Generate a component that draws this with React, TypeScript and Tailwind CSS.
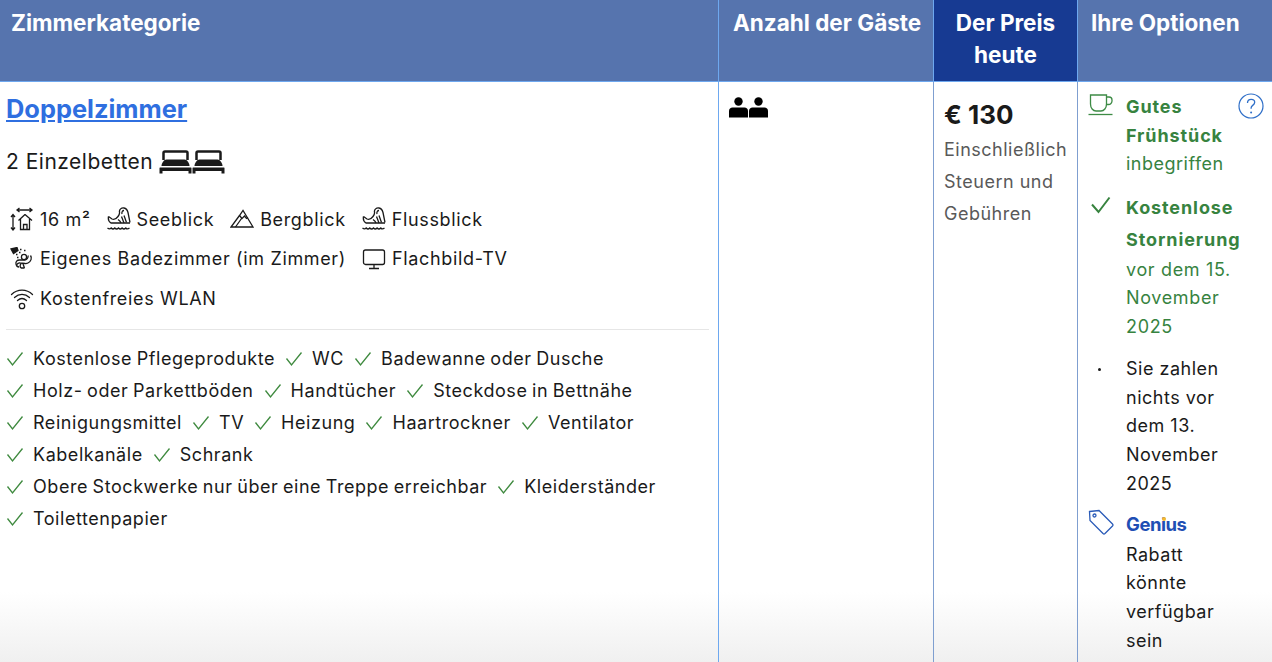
import React from "react";

const SizeIcon = () => (
  <svg width="24" height="24" viewBox="0 0 24 24" fill="none" stroke="#1a1a1a" strokeWidth="1.300" className="shrink-0">
    <path d="M7 3h15M9.500 1l-2.500 2 2.500 2M19.500 1l2.500 2-2.500 2" />
    <path d="M3 8v15M1 10l2-2.500L5 10M1 20.500l2 2.500 2-2.500" />
    <path d="M15 7.500L8.500 13.500M15 7.500l7 6M10.500 12v10.500h9V12M13.500 22.500v-5h3.500v5" />
  </svg>
);

const WaterViewIcon = () => (
  <svg width="24" height="24" viewBox="0 0 24 24" fill="none" stroke="#1a1a1a" strokeWidth="1.300" className="shrink-0">
    <path d="M1.500 9.500l3.500 2.500c2.500 1 4.500-.5 6-2.500 1.200-1.600 1.800-3 1.500-4.500C12 2.500 14.500.5 17 1c2.500.5 3.500 2.500 4 4.500l2 10" />
    <path d="M15 7c-.5-2 .5-3.500 2-3.500M17 8.500l2.500 7M14.500 9.500l2.500 6.500M11 12.500c1.500 1 2.500 2 3 3.500" />
    <path d="M1.500 9.500c-.5 2.500 0 5 2.500 6.500h19" />
    <path d="M.5 21c1.500 1.300 2.500 1.300 3.700 0 1.200 1.300 2.400 1.300 3.600 0 1.200 1.300 2.400 1.300 3.700 0 1.200 1.300 2.400 1.300 3.600 0 1.200 1.300 2.400 1.300 3.700 0 1 1.300 2 1.300 3.700 0" />
  </svg>
);

const MountainIcon = () => (
  <svg width="24" height="24" viewBox="0 0 24 24" fill="none" stroke="#1a1a1a" strokeWidth="1.300" className="shrink-0">
    <path d="M1 20h22L13 3.500 9.500 8.500 1 20z" />
    <path d="M5.500 20l6-8.500M9.500 8.500l2.500 3 2.500-2.500 2 2.500 1.500-1" />
  </svg>
);

const ShowerIcon = () => (
  <svg width="24" height="24" viewBox="0 0 24 24" fill="none" stroke="#1a1a1a" strokeWidth="1.300" className="shrink-0">
    <path d="M1 2l6-1.500 1 3-4.500 3z" fill="#1a1a1a" />
    <path d="M10 2.500h1.500M14 3.500h1.500M9 5.500h1.500M6 7.500h1.500M7 10.500h1.500" strokeWidth="1.500" />
    <circle cx="14" cy="10" r="2.600" />
    <path d="M20.500 8.500c1.800 2.500.5 6-2.500 7.500-1 .5-2.200.6-3 .5l-5-.5c-1.500-.2-2.700.5-2.800 1.700" />
    <path d="M18 8.500c.5 2-1 4.500-3 4.500H9.500c-2.500 0-4 1.800-3.500 4 .4 1.800 1.500 3 3 3" />
    <path d="M11 16.500c-1 1.500-1 3.500 0 4.500M11 21h3.500M13 17l1.500 4" />
  </svg>
);

const WifiIcon = () => (
  <svg width="24" height="24" viewBox="0 0 24 24" fill="none" stroke="#1a1a1a" strokeWidth="1.300" strokeLinecap="round" className="shrink-0">
    <path d="M1.500 7.500C7.500 1.700 16.500 1.700 22.500 7.500" />
    <path d="M4.500 10.500C9 6.300 15 6.300 19.500 10.500" />
    <path d="M7.500 13.500c2.700-2.400 6.300-2.400 9 0" />
    <circle cx="12" cy="19" r="2.700" />
  </svg>
);

const TvIcon = () => (
  <svg width="24" height="24" viewBox="0 0 24 24" fill="none" stroke="#1a1a1a" strokeWidth="1.300" className="shrink-0">
    <rect x="1.500" y="3" width="21" height="14.500" rx="2" />
    <path d="M12 17.500v4M7 21.500h10" />
  </svg>
);

const BedIcon = () => (
  <svg width="33" height="24" viewBox="0 0 33 24" fill="#1a1a1a" className="shrink-0">
    <path d="M4.500 10V3a1.500 1.500 0 0 1 1.500-1.500h21A1.500 1.500 0 0 1 28.500 3v7" fill="none" stroke="#1a1a1a" strokeWidth="2.500" />
    <path d="M2.500 16c0-3 2.500-6.500 5-6.500h18c2.500 0 5 3.500 5 6.500z" />
    <path d="M1 17.500h31a.5.5 0 0 1 .5.5v5.500h-3V21h-26v2.500h-3V18a.5.5 0 0 1 .5-.5z" />
  </svg>
);

const GuestIcon = () => (
  <svg width="19" height="21" viewBox="0 0 19 21" fill="#000" className="shrink-0">
    <circle cx="9.500" cy="4.500" r="4.200" />
    <path d="M0 20.500V14c0-2 1.500-3.500 3.500-3.500h12c2 0 3.500 1.500 3.500 3.500v6.500z" />
  </svg>
);

const CheckSmall = () => (
  <svg width="18" height="18" viewBox="0 0 18 18" fill="none" stroke="#3f8a3f" strokeWidth="1.300" className="shrink-0">
    <path d="M1.500 8.500l5 6.500L16.500 2.500" />
  </svg>
);

const Amenity = ({ label }: { label: string }) => (
  <span className="flex items-center gap-[9px] text-[18px] leading-[32px] tracking-[0.55px] text-[#1a1a1a] [word-spacing:-1px]">
    <CheckSmall />
    {label}
  </span>
);

const Facility = ({ icon, label }: { icon: React.ReactNode; label: string }) => (
  <span className="flex items-center gap-[6px] text-[18px] tracking-[0.65px] text-[#1a1a1a]">
    {icon}
    {label}
  </span>
);

const amenityRows = [
  ["Kostenlose Pflegeprodukte", "WC", "Badewanne oder Dusche"],
  ["Holz- oder Parkettböden", "Handtücher", "Steckdose in Bettnähe"],
  ["Reinigungsmittel", "TV", "Heizung", "Haartrockner", "Ventilator"],
  ["Kabelkanäle", "Schrank"],
  ["Obere Stockwerke nur über eine Treppe erreichbar", "Kleiderständer"],
  ["Toilettenpapier"],
];

export default function App() {
  return (
    <div className="relative h-[662px] w-[1272px] overflow-hidden bg-white font-['Inter',sans-serif]">
      {/* fade at the bottom edge, sits behind the table */}
      <div className="absolute bottom-0 left-0 h-[70px] w-full bg-gradient-to-b from-transparent to-[#f0f0f0]" />

      {/* header row */}
      <div className="relative flex h-[82px] border-b border-[#6ea8ef] text-[22.500px] font-bold leading-[32px] text-white">
        <div className="w-[719px] shrink-0 border-r border-[#6ea8ef] bg-[#5674ae] pl-[11px] pt-[7px]">Zimmerkategorie</div>
        <div className="w-[215px] shrink-0 border-r border-[#6ea8ef] bg-[#5674ae] pl-[14px] pt-[7px]">Anzahl der Gäste</div>
        <div className="w-[144px] shrink-0 border-r border-[#6ea8ef] bg-[#173a92] pt-[7px] text-center">Der Preis heute</div>
        <div className="flex-1 bg-[#5674ae] pl-[13px] pt-[7px]">Ihre Optionen</div>
      </div>

      {/* body row */}
      <div className="relative flex h-[580px]">
        <div className="w-[719px] shrink-0 border-r border-[#6ea8ef] pl-[6px] pr-[9px]">
          <a className="mt-[11px] block text-[25.400px] font-bold leading-[32px] text-[#2f6fe0] underline">Doppelzimmer</a>
          <div className="mt-[25px] flex h-[24px] items-center text-[21px] tracking-[0.5px] text-[#1a1a1a]">
            <span className="mr-[6px]">2 Einzelbetten</span>
            <BedIcon />
            <BedIcon />
          </div>
          <div className="mt-[33px] flex flex-col gap-[15.750px] border-b border-[#e6e6e6] pb-[18.500px] pl-[4px]">
            <div className="flex h-[24px] items-center gap-[16px]">
              <Facility icon={<SizeIcon />} label="16 m²" />
              <Facility icon={<WaterViewIcon />} label="Seeblick" />
              <Facility icon={<MountainIcon />} label="Bergblick" />
              <Facility icon={<WaterViewIcon />} label="Flussblick" />
            </div>
            <div className="flex h-[24px] items-center gap-[16px]">
              <Facility icon={<ShowerIcon />} label="Eigenes Badezimmer (im Zimmer)" />
              <Facility icon={<TvIcon />} label="Flachbild-TV" />
            </div>
            <div className="flex h-[24px] items-center gap-[16px]">
              <Facility icon={<WifiIcon />} label="Kostenfreies WLAN" />
            </div>
          </div>
          <div className="mt-[13px]">
            {amenityRows.map((row) => (
              <div key={row[0]} className="flex gap-[10px]">
                {row.map((label) => (
                  <Amenity key={label} label={label} />
                ))}
              </div>
            ))}
          </div>
        </div>

        <div className="flex w-[215px] shrink-0 gap-[1px] border-r border-[#7f9fd0] pl-[10px] pt-[15px]">
          <GuestIcon />
          <GuestIcon />
        </div>

        <div className="w-[144px] shrink-0 border-r border-[#7f9fd0] pl-[10px] pt-[16px]">
          <div className="text-[26px] font-bold leading-[34px] text-[#1a1a1a]">€ 130</div>
          <div className="mt-[2px] text-[18px] leading-[32px] tracking-[0.5px] text-[#595959]">
            Einschließlich
            <br />
            Steuern und
            <br />
            Gebühren
          </div>
        </div>

        <div className="flex-1 pl-[10px] pt-[11px] text-[18px] tracking-[0.5px]">
          <div className="relative flex">
            <svg width="26" height="24" viewBox="0 0 26 24" fill="none" stroke="#3d8b45" strokeWidth="1.300" className="shrink-0">
              <path d="M2.500 2h16v9c0 4-2.500 7-5.500 7H8c-3 0-5.500-3-5.500-7z" />
              <path d="M18.500 4h2.500a3 3 0 0 1 3 3v1a3.500 3.500 0 0 1-3.500 3.500h-2.500" />
              <path d="M.5 21.500h24" />
            </svg>
            <div className="ml-[12px] leading-[28.500px] text-[#37833f]">
              <div className="font-bold tracking-[0.9px]">
                Gutes
                <br />
                Frühstück
              </div>
              <div>inbegriffen</div>
            </div>
            <svg width="26" height="26" viewBox="0 0 26 26" fill="none" className="absolute right-[8px] top-[0px]">
              <circle cx="13" cy="13" r="12" stroke="#2f6fc8" strokeWidth="1.200" />
              <path d="M9.500 10c0-2.300 1.600-3.700 3.700-3.700 2 0 3.500 1.300 3.500 3 0 1.500-.9 2.300-2 3.100-1 .7-1.600 1.300-1.600 2.600v.8" stroke="#2f6fc8" strokeWidth="1.300" />
              <circle cx="13.100" cy="19.500" r="1" fill="#2f6fc8" />
            </svg>
          </div>

          <div className="mt-[13px] flex">
            <svg width="26" height="24" viewBox="0 0 26 24" fill="none" stroke="#37833f" strokeWidth="2" className="mt-[2px] shrink-0">
              <path d="M4 10.500l6.500 7.500L21.500 3.500" />
            </svg>
            <div className="ml-[12px] text-[#37833f]">
              <div className="font-bold leading-[32px] tracking-[0.9px]">
                Kostenlose
                <br />
                Stornierung
              </div>
              <div className="leading-[28.500px] tracking-[0.65px]">
                vor dem 15.
                <br />
                November
                <br />
                2025
              </div>
            </div>
          </div>

          <div className="mt-[14px] flex leading-[28.700px] text-[#1a1a1a]">
            <span className="ml-[10px] mt-[13px] h-[3px] w-[3px] shrink-0 rounded-full bg-[#1a1a1a]" />
            <div className="ml-[25px]">
              Sie zahlen
              <br />
              nichts vor
              <br />
              dem 13.
              <br />
              November
              <br />
              2025
            </div>
          </div>

          <div className="mt-[10px] flex">
            <svg width="26" height="26" viewBox="0 0 26 26" fill="none" stroke="#2a5bb8" strokeWidth="1.300" className="shrink-0">
              <path d="M1.500 2.500l9.500-1 13.500 13.500a1.500 1.500 0 0 1 0 2L17 24.500a1.500 1.500 0 0 1-2 0L2 11.500z" />
              <circle cx="6.500" cy="6.500" r="1.500" />
            </svg>
            <div className="ml-[12px] text-[#1a1a1a]">
              <div className="text-[18.500px] font-bold leading-[30px] tracking-[-0.5px] text-[#1f4fb4]">
                Gen
                <span className="relative">
                  i
                  <span className="absolute left-[1px] top-[4px] h-[4px] w-[4px] rounded-full bg-[#f5b82e]" />
                </span>
                us
              </div>
              <div className="mt-[2px] leading-[28.700px]">
                Rabatt
                <br />
                könnte
                <br />
                verfügbar
                <br />
                sein
              </div>
            </div>
          </div>
        </div>
      </div>
    </div>
  );
}
